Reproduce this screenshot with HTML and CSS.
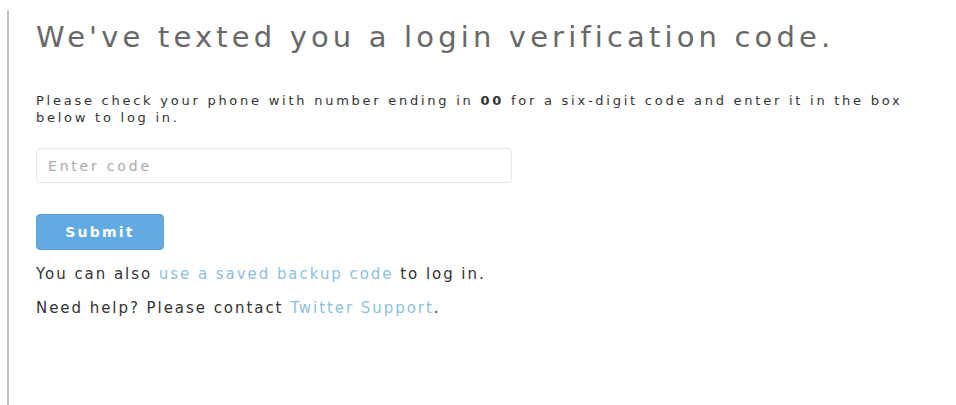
FILE: index.html
```html
<!DOCTYPE html>
<html lang="en">
<head>
<meta charset="utf-8">
<title>Login verification</title>
<link rel="stylesheet" href="styles.css">
</head>
<body>
<main class="page">
  <h1 class="title">We've texted you a login verification code.</h1>
  <p class="lead">Please check your phone with number ending in <b>00</b> for a six-digit code and enter it in the box below to log in.</p>
  <form class="form">
    <input class="code-input" type="text" placeholder="Enter code">
    <button class="submit" type="button">Submit</button>
  </form>
  <p class="note">You can also <a href="#" class="link">use a saved backup code</a> to log in.</p>
  <p class="note">Need help? Please contact <a href="#" class="link">Twitter Support</a>.</p>
</main>
</body>
</html>
```
FILE: styles.css
```css
html, body {
  margin: 0;
  background: #fff;
}

body {
  font-family: "DejaVu Sans", "Liberation Sans", Arial, sans-serif;
  color: #333;
}

.page {
  margin: 10px 0 0 7px;
  height: 395px;
  box-sizing: border-box;
  border-left: 2px solid #c4c4c4;
  padding: 9px 0 0 27px;
}

.title {
  margin: 0;
  font-size: 29px;
  line-height: 36px;
  font-weight: normal;
  color: #686868;
  letter-spacing: 4.15px;
}

.lead {
  margin: 37px 0 0;
  width: 900px;
  font-size: 13px;
  line-height: 17px;
  letter-spacing: 2.75px;
  color: #333;
}

.lead b {
  font-weight: bold;
}

.form {
  display: flex;
  flex-direction: column;
  align-items: flex-start;
  gap: 31px;
  margin-top: 22px;
}

.code-input {
  box-sizing: border-box;
  width: 476px;
  height: 35px;
  padding: 0 11px;
  border: 1px solid #e6e6e6;
  border-radius: 4px;
  font-family: inherit;
  font-size: 14px;
  letter-spacing: 2.8px;
  color: #333;
  outline: none;
}

.code-input::placeholder {
  color: #aaa;
}

.submit {
  box-sizing: border-box;
  width: 128px;
  height: 36px;
  border: 1px solid #5aa2d8;
  border-radius: 4px;
  background: #62abe2;
  color: #fff;
  font-family: inherit;
  font-size: 14px;
  font-weight: bold;
  letter-spacing: 2.2px;
}

.note {
  margin: 16px 0 0;
  font-size: 15px;
  line-height: 17px;
  letter-spacing: 1.95px;
  color: #333;
}

.note + .note {
  margin-top: 17px;
}

.link {
  color: #8dbfe0;
  text-decoration: none;
}
```
